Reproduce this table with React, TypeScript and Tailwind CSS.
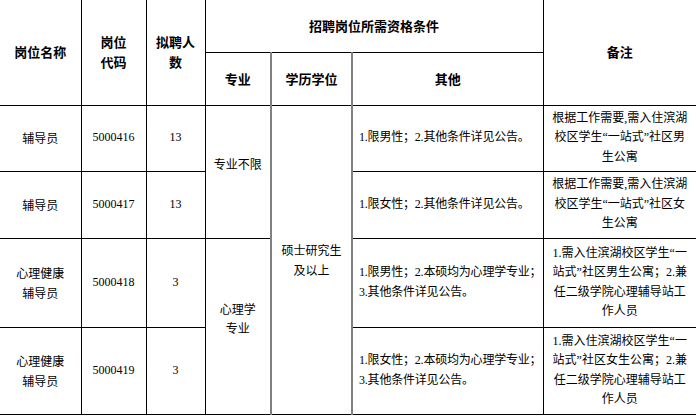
const ROWS = [
  {
    name: ["辅导员"],
    code: "5000416",
    count: "13",
    other: ["1.限男性；2.其他条件详见公告。"],
    note: ["根据工作需要,需入住滨湖", "校区学生“一站式”社区男", "生公寓"],
    h: "h-[66px]",
  },
  {
    name: ["辅导员"],
    code: "5000417",
    count: "13",
    other: ["1.限女性；2.其他条件详见公告。"],
    note: ["根据工作需要,需入住滨湖", "校区学生“一站式”社区女", "生公寓"],
    h: "h-[67px]",
  },
  {
    name: ["心理健康", "辅导员"],
    code: "5000418",
    count: "3",
    other: ["1.限男性；2.本硕均为心理学专业；", "3.其他条件详见公告。"],
    note: ["1.需入住滨湖校区学生“一", "站式”社区男生公寓；2.兼", "任二级学院心理辅导站工", "作人员"],
    h: "h-[89px]",
  },
  {
    name: ["心理健康", "辅导员"],
    code: "5000419",
    count: "3",
    other: ["1.限女性；2.本硕均为心理学专业；", "3.其他条件详见公告。"],
    note: ["1.需入住滨湖校区学生“一", "站式”社区女生公寓；2.兼", "任二级学院心理辅导站工", "作人员"],
    h: "h-[87px]",
  },
];

function Lines({ items }: { items: string[] }) {
  return (
    <>
      {items.map((t, i) => (
        <div key={i} className="whitespace-nowrap">
          {t}
        </div>
      ))}
    </>
  );
}

const th = "border-black font-bold text-[13px] leading-[20px] text-center align-middle p-0";
const td = "border-black text-[12px] leading-[19.5px] text-center align-middle p-0";

export default function App() {
  return (
    <div className="w-[696px] h-[416px] bg-white overflow-hidden text-black font-['Liberation_Serif','Noto_Sans_CJK_SC',serif]">
      <table className="table-fixed border-collapse w-[696px]">
        <colgroup>
          <col className="w-[81px]" />
          <col className="w-[65px]" />
          <col className="w-[59px]" />
          <col className="w-[66px]" />
          <col className="w-[81px]" />
          <col className="w-[191px]" />
          <col className="w-[153px]" />
        </colgroup>
        <thead className="font-['Noto_Sans_CJK_SC',sans-serif]">
          <tr className="h-[52px]">
            <th rowSpan={2} className={`${th} border-r border-b`}>岗位名称</th>
            <th rowSpan={2} className={`${th} border-r border-b`}>
              岗位<br />代码
            </th>
            <th rowSpan={2} className={`${th} border-r border-b`}>
              拟聘人<br />数
            </th>
            <th colSpan={3} className={`${th} border-r border-b`}>招聘岗位所需资格条件</th>
            <th rowSpan={2} className={`${th} border-b`}>备注</th>
          </tr>
          <tr className="h-[53px]">
            <th className={`${th} border-b border-r-2 border-r-[#808080]`}>专业</th>
            <th className={`${th} border-b border-r-2 border-r-[#808080]`}>学历学位</th>
            <th className={`${th} border-b border-r`}>其他</th>
          </tr>
        </thead>
        <tbody>
          {ROWS.map((r, i) => (
            <tr key={r.code} className={r.h}>
              <td className={`${td} border-r border-b font-['Noto_Sans_CJK_SC',sans-serif]`}>
                <Lines items={r.name} />
              </td>
              <td className={`${td} border-r border-b`}>{r.code}</td>
              <td className={`${td} border-r border-b`}>{r.count}</td>
              {i === 0 && (
                <td rowSpan={2} className={`${td} border-b border-r-2 border-r-[#808080] pb-[16px] font-['Noto_Sans_CJK_SC',sans-serif]`}>
                  专业不限
                </td>
              )}
              {i === 2 && (
                <td rowSpan={2} className={`${td} border-b border-r-2 border-r-[#808080] pb-[16px] font-['Noto_Sans_CJK_SC',sans-serif]`}>
                  心理学<br />专业
                </td>
              )}
              {i === 0 && (
                <td rowSpan={4} className={`${td} border-b border-r-2 border-r-[#808080] font-['Noto_Sans_CJK_SC',sans-serif]`}>
                  硕士研究生<br />及以上
                </td>
              )}
              <td className={`${td} border-r border-b text-left pl-[6px] tracking-[-0.2px]`}>
                <Lines items={r.other} />
              </td>
              <td className={`${td} border-b`}>
                <Lines items={r.note} />
              </td>
            </tr>
          ))}
        </tbody>
      </table>
    </div>
  );
}
